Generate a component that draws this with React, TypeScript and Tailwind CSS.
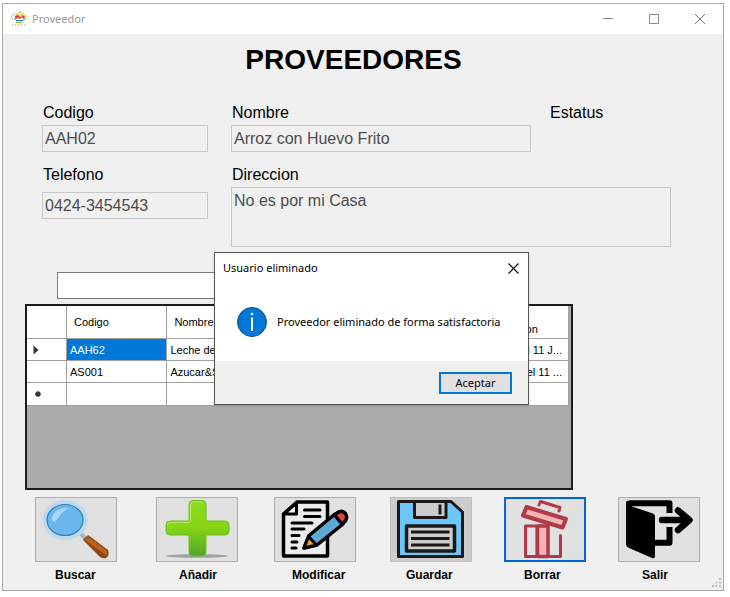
import type { ReactNode } from 'react';

const SANS = "font-['Liberation_Sans',Arial,sans-serif]";
const UI = "font-['Noto_Sans','Open_Sans',sans-serif]";

function AppIcon() {
  return (
    <svg width="16" height="16" viewBox="0 0 16 16" aria-hidden="true">
      <path d="M4 2.500 L1.500 4 L0.500 6.500 L2 9 M12 2.500 L14.500 4 L15.500 6.500 L14 9" fill="none" stroke="#8bbf3f" strokeWidth="1" strokeDasharray="2 1" />
      <path d="M3.500 6 L6 2.500 L8 4 L11 3 L13 5 L13 7 L8 7.500 Z" fill="#f59a23" />
      <circle cx="5.500" cy="6" r="1.500" fill="#e5258c" />
      <circle cx="8.500" cy="6.500" r="1.300" fill="#d6249f" />
      <circle cx="12.500" cy="6" r="1.300" fill="#e5258c" />
      <circle cx="9.500" cy="4.500" r="1.400" fill="#ffd21f" />
      <path d="M7.500 2.500 L9.500 0.500 L10 2" stroke="#7cc242" fill="none" />
      <path d="M3 8 H5 M12 8 H14 M5 9.500 H12" stroke="#1779c4" />
      <path d="M5 11.500 H11" stroke="#7cc242" />
      <path d="M1 14 H15" stroke="#f5934a" strokeDasharray="1.500 1.500" />
    </svg>
  );
}

function SearchIcon() {
  return (
    <svg width="80" height="63" viewBox="0 0 80 63" aria-hidden="true">
      <path d="M44 35 L50 41" stroke="#9fb4c4" strokeWidth="4" />
      <path d="M47 42 L52 37 L72 52 Q74 57 70 60 Q66 61 63 58 Z" fill="#8f4716" />
      <path d="M49 42 L52 38.500 L71 53 Q72 56 70 57 Z" fill="#b5651f" />
      <ellipse cx="29" cy="22" rx="20.500" ry="18" fill="#6bb6ea" stroke="#c3d9ea" strokeWidth="4.500" />
      <ellipse cx="29" cy="22" rx="18" ry="15.500" fill="none" stroke="#2b84c4" strokeWidth="1.200" />
      <path d="M16 23 C15 14 24 9 33 10.500 C25 13 24 19 19 24 Z" fill="#a8d6f5" />
    </svg>
  );
}

function AddIcon() {
  return (
    <svg width="80" height="63" viewBox="0 0 80 63" aria-hidden="true">
      <defs>
        <linearGradient id="plusFill" x1="0" y1="0" x2="0" y2="1">
          <stop offset="0" stopColor="#8fdc1c" />
          <stop offset="0.5" stopColor="#86d414" />
          <stop offset="1" stopColor="#4fa52e" />
        </linearGradient>
      </defs>
      <ellipse cx="40" cy="58" rx="31" ry="1.800" fill="#a0a0a0" />
      <path
        d="M36 2.500 H45 Q49 2.500 49 6.500 V23 H68 Q72 23 72 27 V33 Q72 37 68 37 H49 V54 Q49 58 45 58 H36 Q32 58 32 54 V37 H13 Q9 37 9 33 V27 Q9 23 13 23 H32 V6.500 Q32 2.500 36 2.500 Z"
        fill="url(#plusFill)"
        stroke="#6cc01f"
      />
      <path d="M33.500 23.500 V7 Q33.500 4 36 4 H45 M10.500 27 Q10.500 24.500 13 24.500 H33" fill="none" stroke="#b4ee5c" />
    </svg>
  );
}

function EditIcon() {
  return (
    <svg width="80" height="63" viewBox="0 0 80 63" aria-hidden="true" strokeLinejoin="round" strokeLinecap="round">
      <path d="M22 4 H52.500 V58 H8.500 V16 Z" fill="#ebebeb" stroke="#000" strokeWidth="3.500" />
      <path d="M21.500 5 V16 H9 Z" fill="#f4f4f4" stroke="#000" strokeWidth="3" />
      <path d="M29.500 12 H45 M29.500 18.500 H45 M17 25 H37 M17 31 H29 M17 37.500 H24 M17 44 H22 M17 50 H21" stroke="#000" strokeWidth="3" />
      <path d="M29 50 L34 37.500 L60 16 L68 26 L42 47 Z" fill="#5aa9d6" stroke="#000" strokeWidth="3.500" />
      <path d="M29 50 L33.500 38.500 L41.500 47 Z" fill="#f39c2b" stroke="#000" strokeWidth="3" />
      <path d="M59.500 17 L62 15 Q67 11.500 70.500 15.500 Q73 20 70 23.500 L67 26 Z" fill="#e0473f" stroke="#000" strokeWidth="3.500" />
    </svg>
  );
}

function SaveIcon() {
  return (
    <svg width="80" height="63" viewBox="0 0 80 63" aria-hidden="true" strokeLinejoin="round">
      <path d="M7.500 3.500 H60 L71.500 14 V58.500 H7.500 Z" fill="#6cc5fb" stroke="#1b1918" strokeWidth="3" />
      <path d="M23.500 3.500 H55 V19.500 H23.500 Z" fill="#cccccc" stroke="#1b1918" strokeWidth="3" />
      <path d="M49 6.500 V16.500" stroke="#1b1918" strokeWidth="3" />
      <path d="M15.500 28 H63.500 V53 H15.500 Z" fill="#cccccc" stroke="#1b1918" strokeWidth="3.500" />
      <path d="M20 34 H58.500 M20 40.500 H58.500 M20 47 H58.500" stroke="#1b1918" strokeWidth="3" />
    </svg>
  );
}

function TrashIcon() {
  return (
    <svg width="78" height="61" viewBox="0 0 78 61" aria-hidden="true" strokeLinejoin="round" strokeLinecap="round">
      <path d="M19.500 27 H31 V57.500 H19.500 Z" fill="#e1e1e1" stroke="#b23a48" strokeWidth="3" />
      <path d="M31.500 27 H42 V57.500 H31.500 Z" fill="#f7b4b4" stroke="#b23a48" strokeWidth="3.500" />
      <path d="M42 57.500 H54.500 V36.500" fill="none" stroke="#b23a48" strokeWidth="3" />
      <path d="M20.500 8 L60 20 L56.500 28.500 L17 16.500 Z" fill="#f7b4b4" stroke="#b23a48" strokeWidth="4" />
      <path d="M33 6 L34.500 2.500 L54 8.500 L53 12" fill="none" stroke="#b23a48" strokeWidth="3" />
    </svg>
  );
}

function ExitIcon() {
  return (
    <svg width="80" height="63" viewBox="0 0 80 63" aria-hidden="true" strokeLinejoin="round">
      <path d="M10 5.200 H50.500 V15 M50.500 29 V44.800 H35" fill="none" stroke="#000" strokeWidth="6" />
      <path d="M7 5 Q7 2.500 9.500 2.500 L13 8.500 L34 15.500 Q36 16.500 36 18 V58 Q36 61 33 60 L9 49.500 Q7 48.500 7 46 Z" fill="#000" />
      <path d="M43 22 H70 M59 12.500 L70.500 22 L59 32" fill="none" stroke="#000" strokeWidth="6.500" strokeLinecap="round" />
    </svg>
  );
}

type Action = { id: string; text: string; icon: ReactNode; look: string };

const actions: Action[] = [
  { id: 'buscar', text: 'Buscar', icon: <SearchIcon />, look: 'border border-[#adadad] bg-[#e1e1e1]' },
  { id: 'anadir', text: 'Añadir', icon: <AddIcon />, look: 'border border-[#adadad] bg-[#e1e1e1]' },
  { id: 'modificar', text: 'Modificar', icon: <EditIcon />, look: 'border border-[#adadad] bg-[#e1e1e1]' },
  { id: 'guardar', text: 'Guardar', icon: <SaveIcon />, look: 'border border-[#bfbfbf] bg-[#cccccc]' },
  { id: 'borrar', text: 'Borrar', icon: <TrashIcon />, look: 'border-2 border-[#0067d7] bg-[#e1e1e1]' },
  { id: 'salir', text: 'Salir', icon: <ExitIcon />, look: 'border border-[#adadad] bg-[#e1e1e1]' },
];

const fieldLook = 'block border border-[#c8c8c8] bg-[#f0f0f0] px-0.5 text-[16px] text-[#4d4d4d] outline-none';
const labelLook = 'block h-6 pl-px text-[16px] leading-6';
const cell = 'overflow-hidden whitespace-nowrap border-b border-r border-[#a0a0a0] px-[3px] text-left font-normal';

function TitleBar() {
  return (
    <header className="flex h-[30px] items-center bg-white pl-2">
      <AppIcon />
      <span className={`${UI} flex-1 pl-[5px] text-[11px] leading-4 text-[#999999]`}>Proveedor</span>
      <button aria-label="Minimizar" className="flex h-full w-[46px] items-center justify-center">
        <svg width="11" height="11" viewBox="0 0 11 11"><path d="M0 4.500 H10" stroke="#8a8a8a" /></svg>
      </button>
      <button aria-label="Maximizar" className="flex h-full w-[46px] items-center justify-center">
        <svg width="11" height="11" viewBox="0 0 11 11"><path d="M0.500 0.500 H9.500 V9.500 H0.500 Z" fill="none" stroke="#8a8a8a" /></svg>
      </button>
      <button aria-label="Cerrar" className="flex h-full w-[46px] items-center justify-center">
        <svg width="11" height="11" viewBox="0 0 11 11"><path d="M0 0 L10 10 M10 0 L0 10" stroke="#777777" /></svg>
      </button>
    </header>
  );
}

function SupplierForm() {
  return (
    <form className="mt-[23px] flex gap-[23px] pl-[39px] text-black">
      <div className="w-[166px]">
        <label htmlFor="codigo" className={labelLook}>Codigo</label>
        <input id="codigo" readOnly value="AAH02" className={`${fieldLook} h-[27px] w-full`} />
        <label htmlFor="telefono" className={`${labelLook} mt-[11px]`}>Telefono</label>
        <input id="telefono" readOnly value="0424-3454543" className={`${fieldLook} mt-[5px] h-[27px] w-full`} />
      </div>
      <div className="w-[440px]">
        <div className="flex gap-[18px]">
          <div className="w-[300px]">
            <label htmlFor="nombre" className={labelLook}>Nombre</label>
            <input id="nombre" readOnly value="Arroz con Huevo Frito" className={`${fieldLook} h-[27px] w-full`} />
          </div>
          <span className={labelLook}>Estatus</span>
        </div>
        <label htmlFor="direccion" className={`${labelLook} mt-[11px]`}>Direccion</label>
        <textarea id="direccion" readOnly value="No es por mi Casa" className={`${fieldLook} h-[60px] w-full resize-none pt-1 leading-[18px]`} />
      </div>
    </form>
  );
}

function SupplierTable() {
  return (
    <div className="ml-[22px] mt-[5px] h-[186px] w-[548px] border-2 border-[#1c1c1c] bg-[#ababab] pr-[2px]">
      <table className="w-full table-fixed border-separate border-spacing-0 bg-white text-[11px] leading-4 text-black">
        <colgroup>
          <col className="w-[40px]" />
          <col /><col /><col /><col /><col />
        </colgroup>
        <thead>
          <tr className="h-[33px]">
            <th className={cell} />
            <th className={`${cell} pl-[7px]`}>Codigo</th>
            <th className={`${cell} pl-[7px]`}>Nombre</th>
            <th className={cell} />
            <th className={cell} />
            <th className={`${cell} pb-px pl-[57px] align-bottom`}>on</th>
          </tr>
        </thead>
        <tbody>
          <tr className="h-[22px]">
            <td className={cell}>
              <svg className="ml-[3px]" width="6" height="10" viewBox="0 0 6 10"><path d="M0.500 0.500 L5.500 5 L0.500 9.500 Z" fill="#333333" /></svg>
            </td>
            <td className={`${cell} bg-[#0078d7] text-white`}>AAH62</td>
            <td className={cell}>Leche de</td>
            <td className={cell} />
            <td className={cell} />
            <td className={`${cell} pr-[6px] text-right!`}>l 11 J...</td>
          </tr>
          <tr className="h-[22px]">
            <td className={cell} />
            <td className={cell}>AS001</td>
            <td className={cell}>Azucar&amp;S</td>
            <td className={cell} />
            <td className={cell} />
            <td className={`${cell} pr-[6px] text-right!`}>el 11 ...</td>
          </tr>
          <tr className="h-[23px]">
            <td className={cell}>
              <svg className="ml-[5px]" width="6" height="6" viewBox="0 0 6 6"><path d="M3 0 V6 M0 3 H6 M1 1 L5 5 M5 1 L1 5" stroke="#333333" strokeWidth="1.300" /></svg>
            </td>
            <td className={cell} />
            <td className={cell} />
            <td className={cell} />
            <td className={cell} />
            <td className={cell} />
          </tr>
        </tbody>
      </table>
    </div>
  );
}

function Toolbar() {
  return (
    <div className="pb-[7px] pl-[32px] pr-[23px] pt-[7px]">
      <div className="grid grid-cols-[121fr_118fr_116fr_114fr_114fr_82fr]">
        {actions.map((a) => (
          <button key={a.id} id={a.id} className={`flex h-[65px] w-[82px] items-center justify-center ${a.look}`}>
            {a.icon}
          </button>
        ))}
      </div>
      <div className="grid grid-cols-[124fr_113fr_114fr_118fr_118fr_58fr] pl-5 pt-[5px] text-[12px] font-bold leading-4 text-black">
        {actions.map((a) => (
          <label key={a.id} htmlFor={a.id}>{a.text}</label>
        ))}
      </div>
    </div>
  );
}

function MessageDialog() {
  return (
    <div role="dialog" aria-label="Usuario eliminado" className={`${UI} absolute left-[211px] top-[248px] w-[315px] border border-[#555555] bg-white text-black shadow-sm`}>
      <div className="flex h-[30px] items-center justify-between pl-2">
        <span className="text-[11px] leading-4">Usuario eliminado</span>
        <button aria-label="Cerrar mensaje" className="flex h-full w-[30px] items-center justify-center">
          <svg width="11" height="11" viewBox="0 0 11 11"><path d="M0.500 0.500 L10.500 10.500 M10.500 0.500 L0.500 10.500" stroke="#111111" strokeWidth="1.200" /></svg>
        </button>
      </div>
      <div className="flex h-[78px] items-center gap-[9px] pl-[22px]">
        <svg width="31" height="31" viewBox="0 0 31 31" aria-hidden="true">
          <circle cx="15" cy="15" r="14.500" fill="#0078d7" stroke="#124a86" />
          <path d="M15 10.500 V24" stroke="#fff" strokeWidth="2" />
          <circle cx="15" cy="7" r="1.300" fill="#fff" />
        </svg>
        <p className="whitespace-nowrap text-[11px] leading-4">Proveedor eliminado de forma satisfactoria</p>
      </div>
      <div className="flex h-[43px] items-center justify-end bg-[#f0f0f0] pr-4">
        <button className="h-[22px] w-[73px] border-2 border-[#0078d7] bg-[#e1e1e1] text-[11px] leading-4">Aceptar</button>
      </div>
    </div>
  );
}

export default function App() {
  return (
    <div className={`${SANS} bg-white pb-[6px] pl-[2px] pr-[6px] pt-[3px]`}>
      <main className="relative border border-[#a9a9a9] bg-[#f0f0f0]">
        <TitleBar />
        <h1 className="pr-[19px] pt-2 text-center text-[28px] font-bold leading-9 text-black">PROVEEDORES</h1>
        <SupplierForm />
        <input aria-label="Filtro" className="ml-[54px] mt-[25px] block h-[27px] w-[300px] border border-[#7a7a7a] bg-white px-1 text-[16px]" />
        <SupplierTable />
        <Toolbar />
        <MessageDialog />
        <svg className="absolute bottom-[2px] right-px" width="10" height="10" viewBox="0 0 10 10" aria-hidden="true">
          <path d="M7 0 H9 V2 H7 Z M7 3.500 H9 V5.500 H7 Z M3.500 3.500 H5.500 V5.500 H3.500 Z M7 7 H9 V9 H7 Z M3.500 7 H5.500 V9 H3.500 Z M0 7 H2 V9 H0 Z" fill="#bfbfbf" />
        </svg>
      </main>
    </div>
  );
}
